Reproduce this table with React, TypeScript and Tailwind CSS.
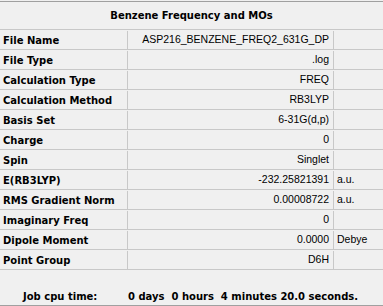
const rows: { label: string; value: string; unit?: string }[] = [
  { label: "File Name", value: "ASP216_BENZENE_FREQ2_631G_DP" },
  { label: "File Type", value: ".log" },
  { label: "Calculation Type", value: "FREQ" },
  { label: "Calculation Method", value: "RB3LYP" },
  { label: "Basis Set", value: "6-31G(d,p)" },
  { label: "Charge", value: "0" },
  { label: "Spin", value: "Singlet" },
  { label: "E(RB3LYP)", value: "-232.25821391", unit: "a.u." },
  { label: "RMS Gradient Norm", value: "0.00008722", unit: "a.u." },
  { label: "Imaginary Freq", value: "0" },
  { label: "Dipole Moment", value: "0.0000", unit: "Debye" },
  { label: "Point Group", value: "D6H" },
];

const bold = "font-['DejaVu_Sans',sans-serif] font-bold text-[10px]";
const plain = "font-['Liberation_Sans',Arial,sans-serif] text-[10.5px]";

export default function App() {
  return (
    <div className="w-[383px] h-[306px] bg-[#f0f0f0] text-black pt-px overflow-hidden">
      <div className="flex flex-col h-[305px] border-t border-b border-[#a0a0a0]">
        {/* summary title */}
        <div className={`h-[28px] flex items-center justify-center pb-px border-b border-[#c8c8c8] ${bold}`}>
          Benzene Frequency and MOs
        </div>

        {rows.map((r) => (
          <div key={r.label} className="flex h-[20px] pt-px border-b border-[#c8c8c8]">
            <div className={`w-[128px] shrink-0 flex items-center pl-[3px] border-r border-[#c8c8c8] ${bold}`}>
              {r.label}
            </div>
            <div className={`w-[206px] shrink-0 flex items-center justify-end pr-[4px] border-r border-[#c8c8c8] ${plain}`}>
              {r.value}
            </div>
            <div className={`flex-1 flex items-center pl-[3px] ${plain}`}>{r.unit}</div>
          </div>
        ))}

        {/* cpu time footer */}
        <div className={`flex-1 flex items-end pb-px whitespace-pre ${bold}`}>
          <span className="pl-[23px] w-[128px]">Job cpu time:</span>
          <span>0 days  0 hours  4 minutes 20.0 seconds.</span>
        </div>
      </div>
    </div>
  );
}
